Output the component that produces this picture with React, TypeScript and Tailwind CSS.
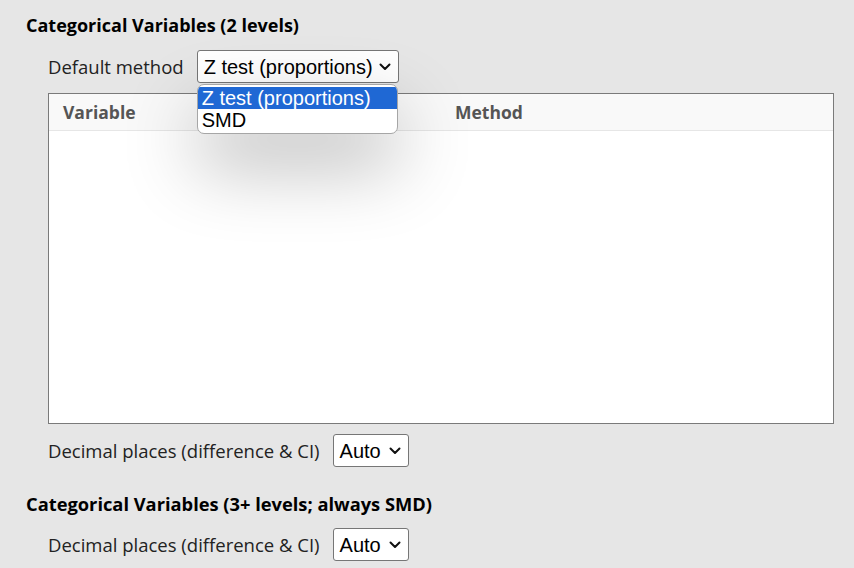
import React from "react";

function Chevron() {
    return (
        <svg width="12" height="8" viewBox="0 0 12 8" className="shrink-0">
            <path d="M1.5 1.5 L6 6 L10.5 1.5" fill="none" stroke="#111" strokeWidth="2" strokeLinecap="round" strokeLinejoin="round" />
        </svg>
    );
}

function FakeSelect({ value, width }: { value: string; width: string }) {
    return (
        <div
            className={`${width} h-[33px] flex items-center justify-between pl-[6px] pr-[7px] bg-white border border-[#767676] rounded-[3px] text-[20px] text-black`}
            style={{ fontFamily: "'Liberation Sans', Arial, sans-serif" }}
        >
            <span>{value}</span>
            <Chevron />
        </div>
    );
}

function Label({ children }: { children: React.ReactNode }) {
    return <span className="text-[18.5px] text-[#222]">{children}</span>;
}

export default function App() {
    const sans = { fontFamily: "'Open Sans', 'Noto Sans', sans-serif" };

    return (
        <div className="w-[854px] h-[568px] overflow-hidden bg-[#e6e6e6] pl-[26px] pr-[20px]" style={sans}>
            <h2 className="mt-[13px] text-[18px] leading-[24px] font-bold text-black">Categorical Variables (2 levels)</h2>

            {/* default method row + open dropdown */}
            <div className="relative ml-[22px] mt-[13px] flex items-center gap-[13px]">
                <Label>Default method</Label>
                <div className="relative">
                    <FakeSelect value="Z test (proportions)" width="w-[202px]" />
                    <div
                        className="absolute z-10 left-0 top-[34px] w-[201px] bg-white border border-[#a6a6a6] rounded-[7px] overflow-hidden py-[2px] shadow-[0_30px_75px_rgba(0,0,0,0.3)] text-[20px] leading-[22px]"
                        style={{ fontFamily: "'Liberation Sans', Arial, sans-serif" }}
                    >
                        <div className="bg-[#1f68d4] text-white px-[4px]">Z test (proportions)</div>
                        <div className="text-black px-[4px]">SMD</div>
                    </div>
                </div>
            </div>

            {/* table */}
            <div className="ml-[22px] mt-[10px] h-[331px] bg-white border border-[#7a7a7a]">
                <div className="grid grid-cols-2 h-[37px] items-center bg-[#f9f9f9] border-b border-[#e6e6e6] text-[17.5px] font-bold text-[#555]">
                    <div className="px-[14px]">Variable</div>
                    <div className="px-[14px]">Method</div>
                </div>
            </div>

            <div className="ml-[22px] mt-[10px] flex items-center gap-[13px]">
                <Label>Decimal places (difference &amp; CI)</Label>
                <FakeSelect value="Auto" width="w-[76px]" />
            </div>

            <h2 className="mt-[25px] text-[18.3px] leading-[24px] font-bold text-black">
                Categorical Variables (3+ levels; always SMD)
            </h2>

            <div className="ml-[22px] mt-[12px] flex items-center gap-[13px]">
                <Label>Decimal places (difference &amp; CI)</Label>
                <FakeSelect value="Auto" width="w-[76px]" />
            </div>
        </div>
    );
}
